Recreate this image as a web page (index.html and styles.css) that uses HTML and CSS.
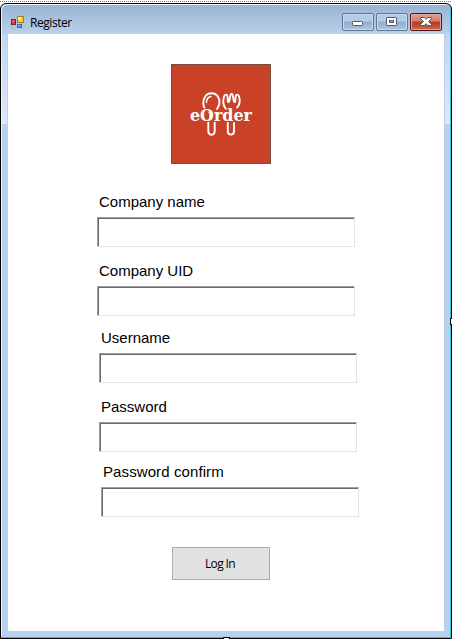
FILE: index.html
```html
<!DOCTYPE html>
<html lang="en">
<head>
<meta charset="utf-8">
<title>Register</title>
<link rel="stylesheet" href="styles.css">
</head>
<body>
<div class="designer">
  <main class="window">
    <header class="titlebar">
      <svg class="app-icon" width="14" height="14" viewBox="0 0 14 14">
        <path d="M.5 2V.5H5M.5 9v4.500H5M11 13.500h2.500V9" fill="none" stroke="#b5bcc4"/>
        <rect x=".5" y="4.500" width="4" height="5" fill="#d43b2c" stroke="#8d1d1d"/>
        <rect x="1.500" y="5.500" width="1.500" height="1.500" fill="#f39a84"/>
        <rect x="6.500" y="1.500" width="6" height="6" fill="#fbc82e" stroke="#a97b19"/>
        <rect x="7" y="2" width="3" height="3" fill="#ffe890"/>
        <rect x="6.500" y="9.500" width="4" height="3" fill="#4f8df0" stroke="#3463b8"/>
        <rect x="7" y="10" width="2" height="1" fill="#a2c8ff"/>
      </svg>
      <h1 class="title">Register</h1>
      <div class="controls">
        <button class="control" aria-label="Minimize"><svg width="30" height="16" viewBox="0 0 30 16"><rect x="9.500" y="7.500" width="10" height="4" rx=".7" fill="#fff" stroke="#50596b"/></svg></button>
        <button class="control" aria-label="Maximize"><svg width="30" height="16" viewBox="0 0 30 16"><rect x="9.500" y="3.500" width="10" height="8" rx=".7" fill="#fff" stroke="#50596b"/><rect x="12.500" y="6.500" width="4" height="2" fill="#91b0d2" stroke="#50596b"/></svg></button>
        <button class="control close" aria-label="Close"><svg width="30" height="16" viewBox="0 0 30 16"><path d="M9.500 3.500h3.800L15 5.300l1.700-1.800h3.800v1.200L17.500 7.500l3 2.800v1.200h-3.800L15 9.700l-1.700 1.800H9.500v-1.200l3-2.800-3-2.800z" fill="#fff" stroke="#535666"/></svg></button>
      </div>
    </header>
    <form class="client">
      <div class="logo">
        <svg width="100" height="100" viewBox="0 0 100 100">
          <rect width="100" height="100" fill="#c94127"/>
          <rect x=".5" y=".5" width="99" height="99" fill="none" stroke="#57544c" stroke-dasharray="3 1"/>
          <g fill="none" stroke="#fff" stroke-width="1.900" stroke-linecap="round" stroke-linejoin="round">
            <path d="M34.500 46c-3-4-3-10 0-14 3-3.700 9-3.700 12 0 2.800 4 2.300 9-.5 13"/>
            <path d="M35.500 38.500c0-3.500 1.500-5.500 4.500-6" stroke-width="1.400"/>
            <path d="M37.300 57v10.500a3.200 3.200 0 0 0 6.400 0V58"/>
            <path d="M55 45c-3-3.500-3.300-8-2-12.500.8-2.700 3.300-2.500 3.500.3l.3 4.200c.2 1.400 1.200 1.400 1.500 0l1-5.500c.3-2 2.200-2 2.500 0l1 5.500c.3 1.400 1.300 1.400 1.500 0l.3-4.200c.2-2.800 2.700-3 3.500-.3 1.300 4.500.8 8-2.100 11"/>
            <path d="M56.800 59v8.500a3.100 3.100 0 0 0 6.200 0V59"/>
          </g>
          <text class="brand" x="19" y="57" textLength="62" lengthAdjust="spacingAndGlyphs">eOrder</text>
          <path d="M37.500 48.500h1.800V54" fill="none" stroke="#fff" stroke-width="1.500"/>
        </svg>
      </div>
      <div class="field company"><label for="company">Company name</label><input id="company"></div>
      <div class="field uid"><label for="uid">Company UID</label><input id="uid"></div>
      <div class="field username"><label for="username">Username</label><input id="username"></div>
      <div class="field password"><label for="password">Password</label><input id="password" type="password"></div>
      <div class="field confirm"><label for="confirm">Password confirm</label><input id="confirm" type="password"></div>
      <button class="login" type="button">Log In</button>
    </form>
  </main>
  <i class="handle right"></i>
  <i class="handle bottom"></i>
</div>
</body>
</html>
```
FILE: styles.css
```css
* { box-sizing: border-box; }

body {
  margin: 0;
  background: #fff;
  font-family: "Liberation Sans", Arial, sans-serif;
}

.designer {
  position: relative;
  width: 452px;
  height: 639px;
  padding-top: 3px;
  overflow: hidden;
  background: repeating-linear-gradient(90deg, #777 0 1px, #fff 1px 2px) 0 1px / 100% 1px no-repeat;
}

.window {
  display: flex;
  flex-direction: column;
  height: 636px;
  padding: 0 7px 7px;
  border: 1px solid #000;
  border-radius: 6px 6px 0 0;
  box-shadow: inset -1px -1px #35bfe3, inset 1px 1px #edf4fb;
  background:
    linear-gradient(#c2d7ee, #dce9f7) 1px 30px / 5px 90px no-repeat,
    linear-gradient(#c2d7ee, #dce9f7) 444px 30px / 5px 90px no-repeat,
    linear-gradient(#98b4d2 0, #b9d1ea 30px);
}

.titlebar {
  display: flex;
  flex: 0 0 30px;
  padding: 0 2px 0 3px;
}

.app-icon { margin-top: 11px; }

.title {
  margin: 10px auto 0 5px;
  font: 12px/18px "Open Sans", sans-serif;
  letter-spacing: -0.45px;
}

.controls {
  display: flex;
  gap: 2px;
  margin-top: 9px;
}

.control {
  width: 32px;
  height: 18px;
  padding: 0;
  border: 1px solid #62768f;
  border-radius: 2px;
  box-shadow: inset 0 0 0 1px #c8dbee;
  background: linear-gradient(#b4cbe3 0 45%, #8faecf 50%, #a9c6e3);
}

.control svg { display: block; }

.close {
  border-color: #4b1420;
  box-shadow: inset 0 0 0 1px #e2a79c;
  background: linear-gradient(#e3a193, #d17d6b 45%, #b53720 50%, #cd6a49);
}

.client {
  flex: 1;
  width: 436px;
  padding-top: 30px;
  background: #fff;
}

.logo {
  height: 100px;
  margin-left: 163px;
}

.logo svg { display: block; }

.brand {
  font: bold 16px "DejaVu Serif", serif;
  fill: #fff;
  stroke: #c94127;
  stroke-width: 2px;
  paint-order: stroke;
}

.field {
  display: flex;
  flex-direction: column;
  gap: 6px;
  width: 258px;
  height: 54px;
}

.field label {
  height: 18px;
  padding-left: 2px;
  font-size: 15px;
  line-height: 18px;
  color: #000;
}

.field input {
  width: 258px;
  height: 30px;
  padding: 2px;
  border: 1px solid;
  border-color: #a0a0a0 #e3e3e3 #e3e3e3 #a0a0a0;
  box-shadow: inset 1px 1px #696969;
  outline: 0;
}

.company { margin: 29px 0 0 89px; }
.uid { margin: 15px 0 0 89px; }
.username { margin: 13px 0 0 91px; }
.password { margin: 15px 0 0 91px; }
.confirm { margin: 11px 0 0 93px; }
.confirm label { letter-spacing: 0.1px; }

.login {
  display: block;
  width: 98px;
  height: 33px;
  margin: 30px 0 0 164px;
  padding: 1px 2px 0 0;
  border: 1px solid #adadad;
  background: #e1e1e1;
  color: #000;
  font: 12px/18px "Open Sans", sans-serif;
  letter-spacing: -0.6px;
}

.handle {
  position: absolute;
  width: 5px;
  height: 5px;
  border: 1px solid #000;
  background: #fff;
}

.right { left: 450px; top: 318px; height: 7px; }
.bottom { left: 223px; top: 637px; width: 7px; }
```
